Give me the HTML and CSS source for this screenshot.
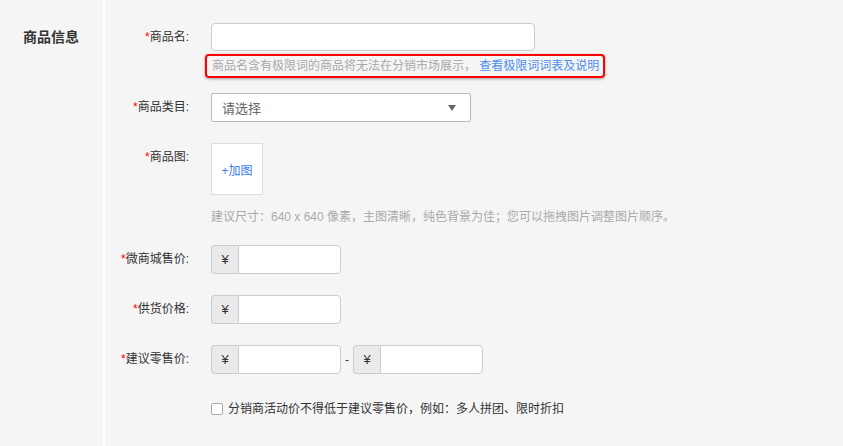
FILE: index.html
```html
<!DOCTYPE html>
<html lang="zh-CN">
<head>
  <meta charset="UTF-8" />
  <title>商品信息</title>
  <link rel="stylesheet" href="styles.css">
</head>
<body>
  <div class="panel">
    <div class="section-title">商品信息</div>
    <div class="form">
      <div class="row row-name">
        <label class="label"><em>*</em>商品名:</label>
        <div class="field">
          <input type="text" class="text-input name-input" />
          <div class="warn-box">
            商品名含有极限词的商品将无法在分销市场展示， <a href="#" class="link">查看极限词词表及说明</a>
          </div>
        </div>
      </div>

      <div class="row row-category">
        <label class="label"><em>*</em>商品类目:</label>
        <div class="field">
          <div class="select">
            <span>请选择</span>
            <span class="caret"></span>
          </div>
        </div>
      </div>

      <div class="row row-image">
        <label class="label"><em>*</em>商品图:</label>
        <div class="field">
          <div class="upload">+加图</div>
          <p class="help">建议尺寸：640 x 640 像素，主图清晰，纯色背景为佳；您可以拖拽图片调整图片顺序。</p>
        </div>
      </div>

      <div class="row row-price">
        <label class="label"><em>*</em>微商城售价:</label>
        <div class="field">
          <div class="price-group"><span class="addon">¥</span><input type="text" /></div>
        </div>
      </div>

      <div class="row row-price">
        <label class="label"><em>*</em>供货价格:</label>
        <div class="field">
          <div class="price-group"><span class="addon">¥</span><input type="text" /></div>
        </div>
      </div>

      <div class="row row-price">
        <label class="label"><em>*</em>建议零售价:</label>
        <div class="field range">
          <div class="price-group"><span class="addon">¥</span><input type="text" /></div>
          <span class="dash">-</span>
          <div class="price-group"><span class="addon">¥</span><input type="text" /></div>
        </div>
      </div>

      <div class="row row-check">
        <div class="label"></div>
        <label class="field check">
          <input type="checkbox" />
          分销商活动价不得低于建议零售价，例如：多人拼团、限时折扣
        </label>
      </div>
    </div>
  </div>
</body>
</html>
```

FILE: styles.css
```css
body {
  margin: 0;
  background-color: #f5f5f5;
  color: #333;
  font-family: "Liberation Sans", "Noto Sans CJK SC", sans-serif;
  font-size: 12px;
}
.panel {
  display: flex;
  min-height: 446px;
}
.section-title {
  width: 80px;
  padding: 23px 0 0 23px;
  line-height: 28px;
  font-size: 14px;
  font-weight: bold;
  color: #333;
  border-right: 2px solid #fff;
}
.form {
  flex: 1;
  padding-top: 23px;
}
.row {
  display: flex;
  align-items: flex-start;
}
.label {
  width: 84px;
  flex-shrink: 0;
  line-height: 28px;
  text-align: right;
  color: #333;
  margin-right: 22px;
}
.label em {
  color: #f00;
  font-style: normal;
}
.field {
  display: flex;
  flex-direction: column;
  align-items: flex-start;
}
input[type="text"] {
  box-sizing: border-box;
  border: 1px solid #ccc;
  background: #fff;
  outline: none;
  font-family: inherit;
  font-size: 12px;
  padding: 0 8px;
}
.name-input {
  width: 324px;
  height: 28px;
  border-radius: 4px;
}
.warn-box {
  box-sizing: border-box;
  margin: 3px 0 0 -6px;
  width: 400px;
  height: 24px;
  line-height: 20px;
  padding: 0 5px;
  border: 2px solid #f00;
  border-radius: 4px;
  box-shadow: 0 1px 3px rgba(0, 0, 0, 0.35);
  color: #aaa;
  white-space: nowrap;
}
.link {
  color: #4a8ef0;
  text-decoration: none;
}
.row-category {
  margin-top: 15px;
}
.select {
  box-sizing: border-box;
  width: 260px;
  height: 29px;
  border: 1px solid #bbb;
  border-radius: 2px;
  background: #fff;
  display: flex;
  align-items: center;
  justify-content: space-between;
  padding: 0 14px 0 10px;
  color: #666;
  font-size: 13px;
}
.caret {
  width: 0;
  height: 0;
  border-left: 4px solid transparent;
  border-right: 4px solid transparent;
  border-top: 6px solid #666;
}
.row-image {
  margin-top: 21px;
}
.upload {
  box-sizing: border-box;
  width: 52px;
  height: 52px;
  border: 1px solid #ddd;
  background: #fff;
  color: #3a7bf0;
  font-size: 12px;
  display: flex;
  align-items: center;
  justify-content: center;
}
.help {
  margin: 13px 0 0;
  line-height: 18px;
  color: #aaa;
}
.row-price {
  margin-top: 21px;
}
.row-image + .row-price {
  margin-top: 19px;
}
.range {
  flex-direction: row;
  align-items: center;
}
.price-group {
  display: flex;
  height: 29px;
}
.addon {
  box-sizing: border-box;
  width: 27px;
  border: 1px solid #ccc;
  border-right: none;
  border-radius: 4px 0 0 4px;
  background: #eaeaea;
  display: flex;
  align-items: center;
  justify-content: center;
  color: #333;
  font-size: 13px;
}
.price-group input[type="text"] {
  width: 103px;
  height: 29px;
  border-radius: 0 4px 4px 0;
}
.dash {
  width: 12px;
  text-align: center;
  color: #333;
}
.row-check {
  margin-top: 26px;
}
.check {
  flex-direction: row;
  align-items: center;
  line-height: 18px;
  color: #333;
}
.check input {
  appearance: none;
  -webkit-appearance: none;
  box-sizing: border-box;
  width: 12px;
  height: 12px;
  margin: 0 5px 0 0;
  border: 1px solid #aaa;
  border-radius: 2px;
  background: #fff;
}
```
